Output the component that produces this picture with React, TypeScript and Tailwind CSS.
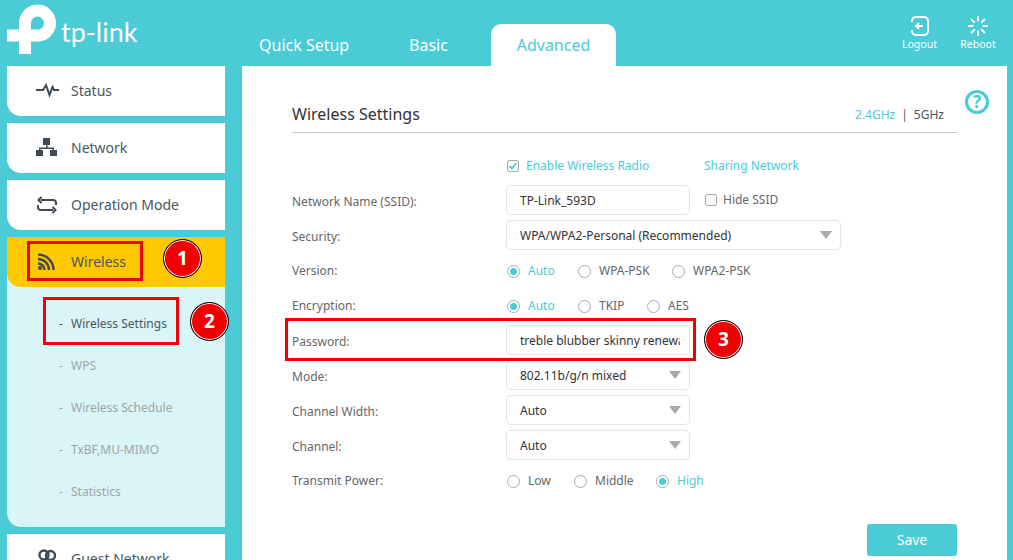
const TEAL = "#4acbd6";

function Caret() {
  return <span className="absolute right-[8px] top-[10px] h-0 w-0 border-x-[6px] border-t-[8px] border-x-transparent border-t-[#a7a9ac]" />;
}

function TextBox({ value, width = "w-[184px]", caret = false }: { value: string; width?: string; caret?: boolean }) {
  return (
    <div className={`relative -ml-px h-[30px] ${width} rounded-[5px] border border-[#e3e3e3] bg-white pl-[13px] pr-[9px] text-[12px] leading-[30px] whitespace-nowrap text-[#333]`}>
      <div className="h-[28px] overflow-hidden">{value}</div>
      {caret && <Caret />}
    </div>
  );
}

function Radio({ label, checked = false, width }: { label: string; checked?: boolean; width: string }) {
  return (
    <div className={`mt-[3px] flex items-center ${width}`}>
      <span className="flex h-[13px] w-[13px] items-center justify-center rounded-full border border-[#a7a9ac] bg-white">
        {checked && <span className="h-[7px] w-[7px] rounded-full bg-[#4acbd6]" />}
      </span>
      <span className={`ml-[8px] text-[12px] ${checked ? "text-[#4acbd6]" : "text-[#666]"}`}>{label}</span>
    </div>
  );
}

function Row({ label, radios = false, children }: { label: string; radios?: boolean; children?: React.ReactNode }) {
  return (
    <div className="flex h-[35px] items-center">
      <div className={`w-[215px] text-[12px] text-[#666] ${radios ? "mt-[3px]" : "mt-[5px]"}`}>{label}</div>
      {children}
    </div>
  );
}

const icons: Record<string, React.ReactNode> = {
  status: <path d="M1 11h7l3-5 3.500 10 3-8 1.500 3h7" fill="none" stroke="#3f4a54" strokeWidth="2" />,
  network: (
    <g fill="#3f4a54">
      <rect x="8" y="2" width="7" height="7" />
      <rect x="1" y="14" width="7" height="6" />
      <rect x="15" y="14" width="7" height="6" />
      <path d="M11 9h1.500v2.500H19V14h-1.500v-1H5.500v1H4v-2.500h7z" />
    </g>
  ),
  mode: (
    <g fill="none" stroke="#3f4a54" strokeWidth="2">
      <path d="M6 7h12a3 3 0 0 1 3 3v2" />
      <path d="M18 17H6a3 3 0 0 1-3-3v-2" />
      <path d="M6.500 4 3.500 7l3 3" />
      <path d="M17.500 14l3 3-3 3" />
    </g>
  ),
  wireless: (
    <g fill="none" stroke="#3f4a54" strokeWidth="2.400">
      <circle cx="5" cy="18" r="2" fill="#3f4a54" stroke="none" />
      <path d="M3 13.500a6.500 6.500 0 0 1 6.500 6.500" />
      <path d="M3 9a11 11 0 0 1 11 11" />
      <path d="M3 4.500a15.500 15.500 0 0 1 15.500 15.500" />
    </g>
  ),
  guest: (
    <g fill="none" stroke="#3f4a54" strokeWidth="2.400">
      <circle cx="9" cy="8" r="4.500" />
      <circle cx="15.500" cy="8.500" r="4.500" />
    </g>
  ),
};

function NavItem({ icon, label, active = false }: { icon: string; label: string; active?: boolean }) {
  return (
    <div className={`flex h-[50px] shrink-0 items-center rounded-bl-[14px] pl-[28px] ${active ? "bg-[#ffc800]" : "bg-white"}`}>
      <svg width="24" height="24" viewBox="0 0 24 24" className="shrink-0">{icons[icon]}</svg>
      <span className="-mt-[2px] ml-[12px] text-[14px] text-[#4a5660]">{label}</span>
    </div>
  );
}

function SubItem({ label, active = false }: { label: string; active?: boolean }) {
  return (
    <div className={`flex h-[42px] items-center pl-[52px] text-[12px] ${active ? "text-[#4a5660]" : "text-[#9aa5a8]"}`}>
      <span className="w-[12px]">-</span>
      {label}
    </div>
  );
}

function Badge({ n, className }: { n: number; className: string }) {
  return (
    <div className={`absolute flex h-[39px] w-[39px] items-center justify-center rounded-full border border-black bg-[#f00000] text-[19px] font-bold text-white shadow-[inset_0_0_0_1px_#fff] ${className}`}>
      {n}
    </div>
  );
}

export default function App() {
  return (
    <div className="relative h-[560px] w-[1013px] overflow-hidden bg-[#4acbd6] font-['Noto_Sans',sans-serif]">
      {/* header */}
      <div className="flex h-[66px] items-end">
        <div className="relative h-[66px] w-[242px] shrink-0">
          <svg width="60" height="56" viewBox="0 0 60 56" className="absolute left-0 top-0">
            <path d="M7 35.600H37.500A12.500 12.500 0 1 0 25 23.300V54" fill="none" stroke="#fff" strokeWidth="12" />
          </svg>
          <span className="absolute left-[61px] top-[14px] font-['Lato',sans-serif] text-[27px] leading-[36px] font-normal text-white">tp-link</span>
        </div>
        <div className="flex h-[42px] items-center pl-[17px] text-[16px] text-white">
          <span className="w-[150px]">Quick Setup</span>
          <span className="w-[82px]">Basic</span>
          <span className="flex h-[42px] w-[125px] items-center justify-center rounded-t-[10px] bg-white text-[#4acbd6]">Advanced</span>
        </div>
        <div className="ml-auto flex h-[66px] pt-[16px] pr-[10px] text-[10.5px] text-white">
          <div className="flex w-[67px] flex-col items-center">
            <svg width="20" height="20" viewBox="0 0 20 20" fill="none" stroke="#fff" strokeWidth="2">
              <path d="M2 6V5a4 4 0 0 1 4-4h8a4 4 0 0 1 4 4v10a4 4 0 0 1-4 4H6a4 4 0 0 1-4-4v-1" />
              <path d="M13 10H6M9 7l-3 3 3 3" />
            </svg>
            <span className="mt-[1px]">Logout</span>
          </div>
          <div className="flex w-[50px] flex-col items-center">
            <svg width="20" height="20" viewBox="0 0 20 20" fill="none" stroke="#fff" strokeWidth="2">
              <path d="M10 0v5.500M10 14.500v5.500M0 10h5.500M14.500 10h5.500M3 3l3.800 3.800M13.200 13.200 17 17M17 3l-3.800 3.800M6.800 13.200 3 17" />
            </svg>
            <span className="mt-[1px]">Reboot</span>
          </div>
        </div>
      </div>

      <div className="flex items-start">
        {/* sidebar */}
        <div className="ml-[7px] flex w-[218px] shrink-0 flex-col gap-[7px]">
          <NavItem icon="status" label="Status" />
          <NavItem icon="network" label="Network" />
          <NavItem icon="mode" label="Operation Mode" />
          <div className="h-[290px] overflow-hidden rounded-bl-[14px] bg-[#daf5f7]">
            <NavItem icon="wireless" label="Wireless" active />
            <div className="pt-[16px]">
              <SubItem label="Wireless Settings" active />
              <SubItem label="WPS" />
              <SubItem label="Wireless Schedule" />
              <SubItem label="TxBF,MU-MIMO" />
              <SubItem label="Statistics" />
            </div>
          </div>
          <NavItem icon="guest" label="Guest Network" />
        </div>

        {/* main panel */}
        <div className="relative ml-[17px] h-[494px] w-[765px] bg-white px-[50px] pt-[33px]">
          <div className="flex h-[34px] w-[665px] items-start justify-between border-b border-[#c8c8c8]">
            <span className="text-[16px] leading-[30px] text-[#333]">Wireless Settings</span>
            <span className="pt-[7px] pr-[13px] text-[12px] text-[#4acbd6]">
              2.4GHz<span className="mx-[6px] text-[#8a4b55]">|</span><span className="text-[#4a5660]">5GHz</span>
            </span>
          </div>
          <div className="absolute top-[24px] right-[18px] flex h-[24px] w-[24px] items-center justify-center rounded-full border-[3px] border-[#4acbd6] text-[17px] font-bold text-[#4acbd6]">?</div>

          <div className="mt-[14px]">
            <div className="flex h-[35px] items-center pt-[3px] pl-[215px]">
              <span className="flex h-[12px] w-[12px] items-center justify-center rounded-[2px] border border-[#a7a9ac]">
                <svg width="10" height="10" viewBox="0 0 10 10" fill="none" stroke={TEAL} strokeWidth="1.800"><path d="M1.500 5l2.500 2.500L8.500 2" /></svg>
              </span>
              <span className="ml-[7px] w-[178px] text-[12px] text-[#4acbd6]">Enable Wireless Radio</span>
              <span className="text-[12px] text-[#4acbd6]">Sharing Network</span>
            </div>
            <Row label="Network Name (SSID):">
              <TextBox value="TP-Link_593D" />
              <span className="ml-[15px] h-[12px] w-[12px] rounded-[2px] border border-[#a7a9ac]" />
              <span className="ml-[6px] text-[12px] text-[#666]">Hide SSID</span>
            </Row>
            <Row label="Security:"><TextBox value="WPA/WPA2-Personal (Recommended)" width="w-[335px]" caret /></Row>
            <Row label="Version:" radios>
              <Radio label="Auto" checked width="w-[71px]" />
              <Radio label="WPA-PSK" width="w-[94px]" />
              <Radio label="WPA2-PSK" width="w-[100px]" />
            </Row>
            <Row label="Encryption:" radios>
              <Radio label="Auto" checked width="w-[71px]" />
              <Radio label="TKIP" width="w-[69px]" />
              <Radio label="AES" width="w-[60px]" />
            </Row>
            <Row label="Password:"><TextBox value="treble blubber skinny renewal" /></Row>
            <Row label="Mode:"><TextBox value="802.11b/g/n mixed" caret /></Row>
            <Row label="Channel Width:"><TextBox value="Auto" caret /></Row>
            <Row label="Channel:"><TextBox value="Auto" caret /></Row>
            <Row label="Transmit Power:" radios>
              <Radio label="Low" width="w-[67px]" />
              <Radio label="Middle" width="w-[82px]" />
              <Radio label="High" checked width="w-[70px]" />
            </Row>
          </div>
          <button className="absolute top-[458px] left-[625px] h-[32px] w-[90px] rounded-[3px] bg-[#4acbd6] pb-[2px] text-[14px] text-white">Save</button>
        </div>
      </div>

      {/* annotations */}
      <div className="absolute top-[241px] left-[27px] h-[40px] w-[116px] border-[3px] border-[#f00000]" />
      <div className="absolute top-[297px] left-[43px] h-[48px] w-[136px] border-[3px] border-[#f00000]" />
      <div className="absolute top-[318px] left-[285px] h-[43px] w-[411px] border-[3px] border-[#f00000]" />
      <Badge n={1} className="top-[239px] left-[163px]" />
      <Badge n={2} className="top-[302px] left-[190px]" />
      <Badge n={3} className="top-[320px] left-[704px]" />
    </div>
  );
}
